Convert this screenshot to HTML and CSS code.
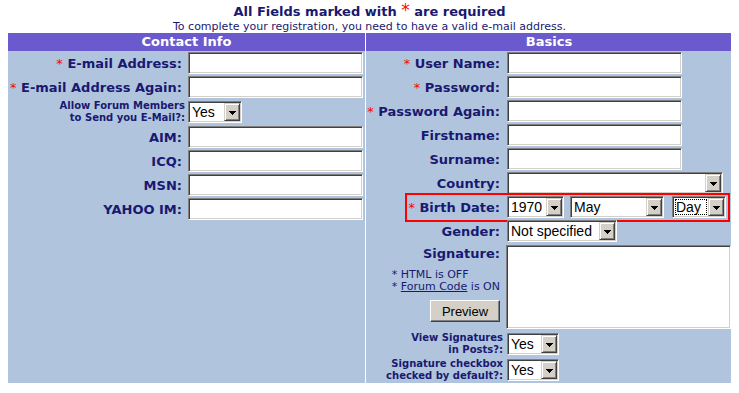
FILE: index.html
```html
<!DOCTYPE html>
<html lang="en">
<head>
    <meta charset="UTF-8" />
    <title>Register</title>
    <link rel="stylesheet" href="styles.css">
</head>
<body>
<div class="title">All Fields marked with <span class="req-big">*</span> are required</div>
<div class="subtitle">To complete your registration, you need to have a valid e-mail address.</div>

<div class="reg-form">
    <div class="head">Contact Info</div>
    <div class="head">Basics</div>

    <!-- contact info -->
    <div class="panel panel-left">
        <div class="row">
            <div class="label"><span class="req">*</span> E-mail Address:</div>
            <input class="text" type="text">
        </div>
        <div class="row">
            <div class="label"><span class="req">*</span> E-mail Address Again:</div>
            <input class="text" type="text">
        </div>
        <div class="row row-tall">
            <div class="label small">Allow Forum Members<br>to Send you E-Mail?:</div>
            <span class="sel"><select class="w-yes"><option>Yes</option><option>No</option></select></span>
        </div>
        <div class="row">
            <div class="label">AIM:</div>
            <input class="text" type="text">
        </div>
        <div class="row">
            <div class="label">ICQ:</div>
            <input class="text" type="text">
        </div>
        <div class="row">
            <div class="label">MSN:</div>
            <input class="text" type="text">
        </div>
        <div class="row">
            <div class="label">YAHOO IM:</div>
            <input class="text" type="text">
        </div>
    </div>

    <!-- basics -->
    <div class="panel panel-right">
        <div class="row">
            <div class="label"><span class="req">*</span> User Name:</div>
            <input class="text" type="text">
        </div>
        <div class="row">
            <div class="label"><span class="req">*</span> Password:</div>
            <input class="text" type="password">
        </div>
        <div class="row">
            <div class="label"><span class="req">*</span> Password Again:</div>
            <input class="text" type="password">
        </div>
        <div class="row">
            <div class="label">Firstname:</div>
            <input class="text" type="text">
        </div>
        <div class="row">
            <div class="label">Surname:</div>
            <input class="text" type="text">
        </div>
        <div class="row">
            <div class="label">Country:</div>
            <span class="sel"><select class="w-country"><option></option></select></span>
        </div>
        <div class="row highlight">
            <div class="label"><span class="req">*</span> Birth Date:</div>
            <div class="dates">
                <span class="sel"><select class="w-year"><option>1970</option></select></span>
                <span class="sel"><select class="w-month"><option>May</option></select></span>
                <span class="sel focus"><select class="w-day"><option>Day</option></select></span>
            </div>
        </div>
        <div class="row">
            <div class="label">Gender:</div>
            <span class="sel"><select class="w-gender"><option>Not specified</option><option>Male</option><option>Female</option></select></span>
        </div>
        <div class="row row-sig">
            <div class="label">
                <div class="sig-title">Signature:</div>
                <div class="sig-notes">
                    * HTML is OFF<br>
                    * <a href="#">Forum Code</a> is ON
                </div>
                <button class="btn">Preview</button>
            </div>
            <textarea class="sig"></textarea>
        </div>
        <div class="row row-tall">
            <div class="label small">View Signatures<br>in Posts?:</div>
            <span class="sel"><select class="w-yes2"><option>Yes</option><option>No</option></select></span>
        </div>
        <div class="row row-tall">
            <div class="label small">Signature checkbox<br>checked by default?:</div>
            <span class="sel"><select class="w-yes2"><option>Yes</option><option>No</option></select></span>
        </div>
    </div>
</div>
</body>
</html>
```

FILE: styles.css
```css
body {
    margin: 0 8px;
    background: #fff;
    color: #191970;
    font-family: "DejaVu Sans", Verdana, sans-serif;
}
.title {
    padding-top: 3px;
    height: 18px;
    font-size: 13px;
    font-weight: bold;
    line-height: 18px;
    text-align: center;
}
.req-big {
    color: #ff0000;
    font-size: 17px;
    font-weight: normal;
    line-height: 12px;
}
.subtitle {
    font-size: 11px;
    line-height: 12px;
    text-align: center;
}
.reg-form {
    width: 724px;
    display: grid;
    grid-template-columns: 357px 366px;
    column-gap: 1px;
}
.head {
    height: 18px;
    line-height: 18px;
    background: #6a5acd;
    color: #fff;
    font-size: 13px;
    font-weight: bold;
    text-align: center;
}
.panel {
    background: #b0c4de;
}
.row {
    display: flex;
    align-items: center;
    height: 24px;
}
.row-tall {
    height: 26px;
}
.label {
    flex: none;
    box-sizing: border-box;
    padding-right: 6px;
    font-size: 13px;
    font-weight: bold;
    text-align: right;
    white-space: nowrap;
}
.panel-left .label {
    width: 180px;
}
.panel-right .label {
    width: 140px;
}
.label.small {
    padding-right: 3px;
    font-size: 10px;
    line-height: 12px;
}
.req {
    color: #ff0000;
    font-weight: normal;
}

/* classic sunken fields */
.text,
.sig,
.sel select {
    box-sizing: border-box;
    margin: 0;
    border: 1px solid;
    border-color: #808080 #fff #fff #808080;
    box-shadow: inset 1px 1px #404040, inset -1px -1px #d4d0c8;
    border-radius: 0;
    background: #fff;
    outline: none;
}
.text {
    width: 175px;
    height: 22px;
    padding: 2px 3px;
    font: 13px "Liberation Sans", Arial, sans-serif;
}
.panel-right .text {
    margin-left: 1px;
}
.sel {
    position: relative;
    display: inline-block;
    height: 22px;
}
.sel select {
    -webkit-appearance: none;
    appearance: none;
    height: 22px;
    padding: 0 20px 0 3px;
    color: #000;
    font: 14px "Liberation Sans", Arial, sans-serif;
}
.sel::after {
    content: "";
    position: absolute;
    top: 2px;
    right: 2px;
    width: 16px;
    height: 18px;
    box-sizing: border-box;
    border: 1px solid;
    border-color: #d4d0c8 #404040 #404040 #d4d0c8;
    box-shadow: inset 1px 1px #fff, inset -1px -1px #808080;
    background: conic-gradient(from -45deg at 50% 100%, #000 90deg, transparent 0) 50% 55% / 7px 4px no-repeat, #d4d0c8;
    pointer-events: none;
}
.sel.focus::before {
    content: "";
    position: absolute;
    top: 3px;
    bottom: 3px;
    left: 3px;
    right: 19px;
    border: 1px dotted #000;
    pointer-events: none;
}
.panel-right .sel {
    margin-left: 1px;
}
.w-yes { width: 54px; }
.w-yes2 { width: 52px; }
.w-country { width: 216px; }
.w-year { width: 57px; }
.w-month { width: 94px; }
.w-day { width: 54px; }
.w-gender { width: 110px; }
.dates {
    display: flex;
}
.dates .sel + .sel {
    margin-left: 6px;
}
.dates .sel.focus {
    margin-left: 8px;
}

/* red box round the birth date row */
.highlight {
    position: relative;
}
.highlight::after {
    content: "";
    position: absolute;
    left: 39px;
    right: 2px;
    top: -2px;
    bottom: -3px;
    border: 2px solid #ff0000;
}

.row-sig {
    height: 88px;
    align-items: flex-start;
}
.row-sig .label {
    padding-top: 3px;
}
.sig-title {
    line-height: 16px;
}
.sig-notes {
    display: inline-block;
    margin-top: 7px;
    font-size: 11px;
    font-weight: normal;
    line-height: 12px;
    text-align: left;
}
.sig-notes a {
    color: #191970;
}
.btn {
    display: block;
    margin: 7px 0 0 auto;
    width: 70px;
    height: 22px;
    padding: 0;
    border: 1px solid;
    border-color: #fff #404040 #404040 #fff;
    box-shadow: inset -1px -1px #808080;
    background: #d4d0c8;
    color: #000;
    font: 13px "Liberation Sans", Arial, sans-serif;
    cursor: pointer;
}
.sig {
    width: 225px;
    height: 84px;
    margin-top: 2px;
    resize: none;
}
```
